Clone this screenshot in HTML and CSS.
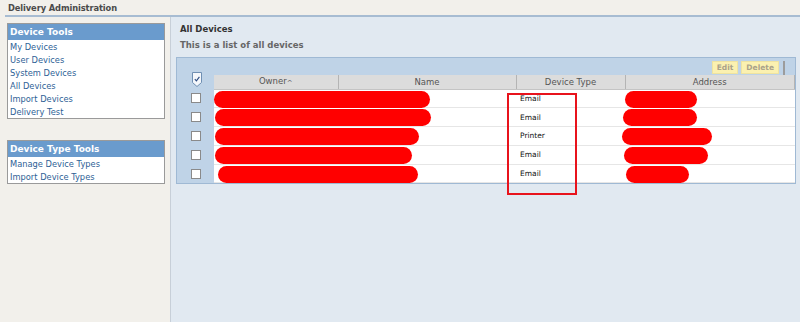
FILE: index.html
```html
<!DOCTYPE html>
<html lang="en">
<head>
    <meta charset="UTF-8">
    <title>Delivery Administration</title>
    <link rel="stylesheet" href="styles.css">
</head>
<body>
    <header class="top">
        <h1>Delivery Administration</h1>
    </header>
    <div class="page">
        <aside class="side">
            <div class="box">
                <div class="box-title">Device Tools</div>
                <a href="#">My Devices</a>
                <a href="#">User Devices</a>
                <a href="#">System Devices</a>
                <a href="#">All Devices</a>
                <a href="#">Import Devices</a>
                <a href="#">Delivery Test</a>
            </div>
            <div class="box">
                <div class="box-title">Device Type Tools</div>
                <a href="#">Manage Device Types</a>
                <a href="#">Import Device Types</a>
            </div>
        </aside>
        <main class="main">
            <h2>All Devices</h2>
            <p class="sub">This is a list of all devices</p>
            <div class="grid">
                <div class="toolbar">
                    <button class="btn">Edit</button>
                    <button class="btn">Delete</button>
                    <span class="sep"></span>
                </div>
                <div class="tablewrap">
                    <table>
                        <thead>
                            <tr>
                                <th class="chk">
                                    <svg width="12" height="17" viewBox="0 0 12 17">
                                        <path d="M1.5 1.5h9v10l-4.5 4l-4.5-4z" fill="#f4f7fb" stroke="#6f8fb3"/>
                                        <path d="M3.8 8.2l1.6 1.6l3-4" fill="none" stroke="#2a4a80" stroke-width="1.1"/>
                                    </svg>
                                </th>
                                <th class="col-owner">Owner<span class="arrow">&#94;</span></th>
                                <th class="col-name">Name</th>
                                <th class="col-type">Device Type</th>
                                <th class="col-addr">Address</th>
                            </tr>
                        </thead>
                        <tbody>
                            <tr>
                                <td class="chk"><span class="cb"></span></td>
                                <td class="redact-cell" colspan="2"><span class="redact" style="left:0;width:216px"></span></td>
                                <td class="type">Email</td>
                                <td class="redact-cell"><span class="redact" style="left:0;width:72px"></span></td>
                            </tr>
                            <tr>
                                <td class="chk"><span class="cb"></span></td>
                                <td class="redact-cell" colspan="2"><span class="redact" style="left:1px;width:216px"></span></td>
                                <td class="type">Email</td>
                                <td class="redact-cell"><span class="redact" style="left:-2px;width:74px"></span></td>
                            </tr>
                            <tr>
                                <td class="chk"><span class="cb"></span></td>
                                <td class="redact-cell" colspan="2"><span class="redact" style="left:1px;width:204px"></span></td>
                                <td class="type">Printer</td>
                                <td class="redact-cell"><span class="redact" style="left:-3px;width:90px"></span></td>
                            </tr>
                            <tr>
                                <td class="chk"><span class="cb"></span></td>
                                <td class="redact-cell" colspan="2"><span class="redact" style="left:1px;width:197px"></span></td>
                                <td class="type">Email</td>
                                <td class="redact-cell"><span class="redact" style="left:-1px;width:84px"></span></td>
                            </tr>
                            <tr>
                                <td class="chk"><span class="cb"></span></td>
                                <td class="redact-cell" colspan="2"><span class="redact" style="left:4px;width:200px"></span></td>
                                <td class="type">Email</td>
                                <td class="redact-cell"><span class="redact" style="left:1px;width:63px"></span></td>
                            </tr>
                        </tbody>
                    </table>
                    <div class="mark"></div>
                </div>
            </div>
        </main>
    </div>
</body>
</html>
```
FILE: styles.css
```css
* {box-sizing: border-box;}
html, body {margin: 0; height: 100%;}
body {
    background: #f2f0eb;
    font-family: "DejaVu Sans", Verdana, sans-serif;
    font-size: 8px;
    color: #333;
    overflow: hidden;
}

.top {height: 17px; padding: 3px 0 0 3px; border-bottom: 2px solid #a7bcd2; margin-left: 5px;}
.top h1 {margin: 0; font-size: 8.3px; font-weight: bold; color: #4a4a4a; letter-spacing: -0.1px;}

.page {display: flex; height: calc(100% - 17px);}

.side {width: 170px; padding: 6px 6px 0 7px; background: #f2f0eb;}
.box {
    border: 1px solid #9a9a9a; background: #fff;
    display: flex; flex-direction: column;
    margin-bottom: 21px; width: 158px;
}
.box-title {
    background: #6a9bcd; color: #fff; font-weight: bold; font-size: 9px;
    height: 16px; line-height: 16px; padding-left: 2px;
}
.box a {
    color: #2e5f96; text-decoration: none;
    height: 13px; line-height: 14px; padding-left: 2px; font-size: 8.3px;
}

.main {
    flex: 1; background: #e1e9f1;
    border-left: 1px solid #c7cfd8;
    padding: 5px 5px 0 5px;
}
.main h2 {margin: 0 0 0 4px; font-size: 8.5px; font-weight: bold; color: #333; height: 17px; line-height: 14px;}
.main .sub {margin: 0 0 0 4px; font-size: 8.5px; font-weight: bold; color: #666; height: 18px; line-height: 13px;}

.grid {
    width: 620px;
    border: 1px solid #9fb9d4;
    background: #bfd3e7;
}
.toolbar {display: flex; justify-content: flex-end; align-items: center; gap: 3px; height: 17px; padding: 2px 10px 0 0;}
.btn {
    font-family: inherit; font-size: 7.5px; font-weight: bold; color: #aaa28a;
    background: #fbf1b0; border: 1px solid #efe3a0; height: 13px; padding: 0 4px; line-height: 10px;
}
.sep {width: 2px; height: 14px; background: #9c9c9c; margin-left: 1px;}

.tablewrap {position: relative;}
table {border-collapse: collapse; width: 100%; table-layout: fixed;}
th {
    background: #dcdcdc; color: #555; font-weight: normal; font-size: 8.5px;
    height: 14px; padding: 0; border-right: 1px solid #b4b4b4; border-bottom: 1px solid #c4c4c4;
}
th.chk {background: #bfd3e7; border: 0; width: 37px; vertical-align: bottom;}
th.chk svg {display: block; margin: -7px 0 1px 14px;}
.col-owner {width: 124px;}
.col-name {width: 178px;}
.col-type {width: 109px;}
.arrow {font-size: 7px; vertical-align: -1px;}

td {height: 18.8px; background: #fff; border-bottom: 1px solid #e6e6e6; padding: 0;}
td.chk {background: #bfd3e7; border: 0; text-align: center;}
.cb {display: inline-block; width: 10px; height: 10px; border: 1px solid #8a8a8a; background: #fff; vertical-align: middle;}
td.type {padding-left: 4px; font-size: 7.5px; color: #111;}
.redact-cell {position: relative;}
.redact {
    position: absolute; top: 1px; height: 17px;
    background: #ff0000; border-radius: 9px;
}
.mark {
    position: absolute; left: 330px; top: 18px;
    width: 70px; height: 102px; border: 2px solid #e8131c;
}
```
